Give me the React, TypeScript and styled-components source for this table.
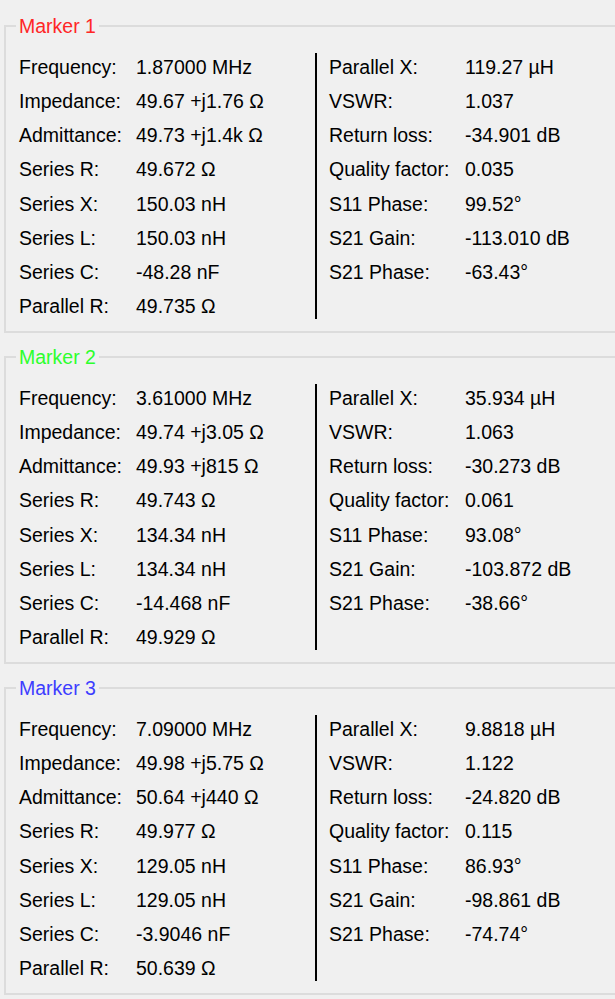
import * as React from "react";
import styled, { createGlobalStyle } from "styled-components";

const GlobalStyle = createGlobalStyle`
  html, body {
    margin: 0;
    padding: 0;
    background: #f0f0f0;
  }
  body {
    font-family: "Liberation Sans", Arial, sans-serif;
    font-size: 19.5px;
    color: #000;
  }
`;

const Page = styled.div`
  width: 615px;
  height: 999px;
  overflow: hidden;
  padding-top: 14px;
  box-sizing: border-box;
`;

const Group = styled.fieldset`
  margin: 0 -12px 12px 4px;
  padding: 12px 0 8px 13px;
  min-width: 0;
  border: 2px solid #dcdcdc;
`;

const Title = styled.legend<{ $color: string }>`
  margin-left: -3px;
  padding: 0 3px;
  line-height: 24px;
  color: ${(p) => p.$color};
`;

const Columns = styled.div`
  display: grid;
  grid-template-columns: 296px auto 1fr;
`;

const Panel = styled.div<{ $labelWidth: number }>`
  display: grid;
  grid-template-columns: ${(p) => p.$labelWidth}px 1fr;
  grid-auto-rows: 34.14px;
  align-items: center;
  align-content: start;
  line-height: 34px;
  white-space: nowrap;
`;

const Divider = styled.div`
  width: 2px;
  height: 266px;
  background: #000;
  margin: 3px 12px 4px 0;
`;

const Label = styled.span``;
const Value = styled.span``;

type Row = [string, string];

type Marker = {
  name: string;
  color: string;
  left: Row[];
  right: Row[];
};

const markers: Marker[] = [
  {
    name: "Marker 1",
    color: "#ff2626",
    left: [
      ["Frequency:", "1.87000 MHz"],
      ["Impedance:", "49.67 +j1.76 Ω"],
      ["Admittance:", "49.73 +j1.4k Ω"],
      ["Series R:", "49.672 Ω"],
      ["Series X:", "150.03 nH"],
      ["Series L:", "150.03 nH"],
      ["Series C:", "-48.28 nF"],
      ["Parallel R:", "49.735 Ω"],
    ],
    right: [
      ["Parallel X:", "119.27 µH"],
      ["VSWR:", "1.037"],
      ["Return loss:", "-34.901 dB"],
      ["Quality factor:", "0.035"],
      ["S11 Phase:", "99.52°"],
      ["S21 Gain:", "-113.010 dB"],
      ["S21 Phase:", "-63.43°"],
    ],
  },
  {
    name: "Marker 2",
    color: "#2cff2c",
    left: [
      ["Frequency:", "3.61000 MHz"],
      ["Impedance:", "49.74 +j3.05 Ω"],
      ["Admittance:", "49.93 +j815 Ω"],
      ["Series R:", "49.743 Ω"],
      ["Series X:", "134.34 nH"],
      ["Series L:", "134.34 nH"],
      ["Series C:", "-14.468 nF"],
      ["Parallel R:", "49.929 Ω"],
    ],
    right: [
      ["Parallel X:", "35.934 µH"],
      ["VSWR:", "1.063"],
      ["Return loss:", "-30.273 dB"],
      ["Quality factor:", "0.061"],
      ["S11 Phase:", "93.08°"],
      ["S21 Gain:", "-103.872 dB"],
      ["S21 Phase:", "-38.66°"],
    ],
  },
  {
    name: "Marker 3",
    color: "#3d3dff",
    left: [
      ["Frequency:", "7.09000 MHz"],
      ["Impedance:", "49.98 +j5.75 Ω"],
      ["Admittance:", "50.64 +j440 Ω"],
      ["Series R:", "49.977 Ω"],
      ["Series X:", "129.05 nH"],
      ["Series L:", "129.05 nH"],
      ["Series C:", "-3.9046 nF"],
      ["Parallel R:", "50.639 Ω"],
    ],
    right: [
      ["Parallel X:", "9.8818 µH"],
      ["VSWR:", "1.122"],
      ["Return loss:", "-24.820 dB"],
      ["Quality factor:", "0.115"],
      ["S11 Phase:", "86.93°"],
      ["S21 Gain:", "-98.861 dB"],
      ["S21 Phase:", "-74.74°"],
    ],
  },
];

function Rows({ rows }: { rows: Row[] }) {
  return (
    <>
      {rows.map(([label, value]) => (
        <React.Fragment key={label}>
          <Label>{label}</Label>
          <Value>{value}</Value>
        </React.Fragment>
      ))}
    </>
  );
}

function MarkerBox({ marker }: { marker: Marker }) {
  return (
    <Group>
      <Title $color={marker.color}>{marker.name}</Title>
      <Columns>
        <Panel $labelWidth={117}>
          <Rows rows={marker.left} />
        </Panel>
        <Divider />
        <Panel $labelWidth={136}>
          <Rows rows={marker.right} />
        </Panel>
      </Columns>
    </Group>
  );
}

export default function App() {
  return (
    <Page>
      <GlobalStyle />
      {markers.map((m) => (
        <MarkerBox key={m.name} marker={m} />
      ))}
    </Page>
  );
}
